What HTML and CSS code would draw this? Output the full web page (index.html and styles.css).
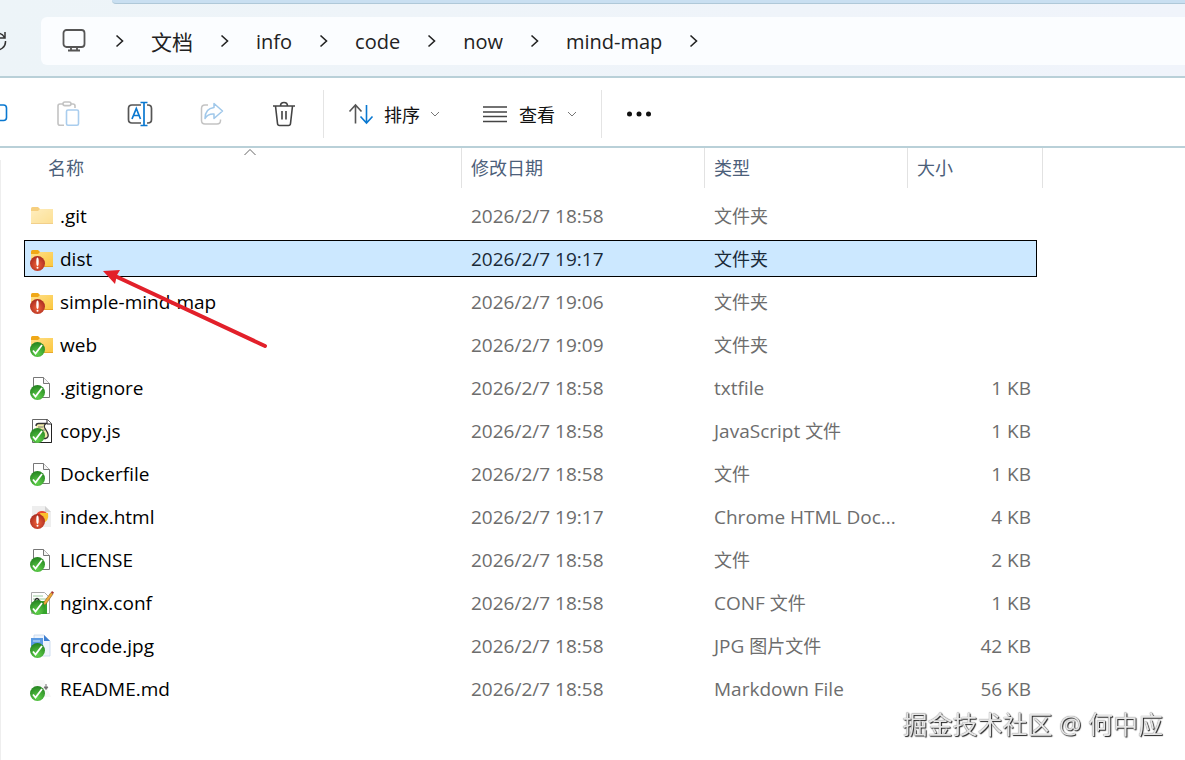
FILE: index.html
```html
<!DOCTYPE html>
<html lang="zh-CN">
  <head>
    <meta charset="utf-8">
    <title>mind-map</title>
    <link rel="stylesheet" href="styles.css">
  </head>
  <body>
    <!-- shared icon shapes -->
    <svg class="defs" width="0" height="0">
      <defs>
        <linearGradient id="folder-fill" x1="0" y1="0" x2="1" y2="1">
          <stop offset="0" stop-color="#ffe08a"/>
          <stop offset="1" stop-color="#fbc63c"/>
        </linearGradient>
        <radialGradient id="green" cx=".5" cy=".8" r=".8">
          <stop offset="0" stop-color="#5fd04a"/>
          <stop offset="1" stop-color="#23821f"/>
        </radialGradient>
        <radialGradient id="red" cx=".5" cy=".6" r=".6">
          <stop offset="0" stop-color="#f0623a"/>
          <stop offset="1" stop-color="#a82a20"/>
        </radialGradient>
      </defs>
      <symbol id="folder" viewBox="0 0 24 24">
        <path d="M1 4.500Q1 3 2.500 3H8l2 2v4H1z" fill="#f0a818"/>
        <path d="M1 7h7l2-2h13v15H1z" fill="url(#folder-fill)"/>
        <path d="M1 19.500h22" stroke="#e8a92c"/>
      </symbol>
      <symbol id="ok" viewBox="0 0 24 24">
        <circle cx="7.500" cy="16.500" r="7.500" fill="url(#green)"/>
        <path d="M3 17.500l2.500 3L12 12" fill="none" stroke="#fff" stroke-width="1.800"/>
      </symbol>
      <symbol id="changed" viewBox="0 0 24 24">
        <circle cx="7.500" cy="16.500" r="7.500" fill="url(#red)"/>
        <ellipse cx="7.500" cy="14.800" rx="1.200" ry="4.200" fill="#fff"/>
        <circle cx="7.500" cy="20.800" r="1" fill="#fff"/>
      </symbol>
      <symbol id="page" viewBox="0 0 24 24">
        <path d="M3.500 1.500h10l6 6v14h-16z" fill="#fff" stroke="#777"/>
        <path d="M13.500 1.500v6h6" fill="#f4f4f4" stroke="#777"/>
      </symbol>
      <symbol id="next" viewBox="0 0 9 14">
        <path d="M1.500 1.500L7.500 7l-6 5.500" fill="none" stroke="#222" stroke-width="1.600"/>
      </symbol>
      <symbol id="drop" viewBox="0 0 10 6">
        <path d="M1 1l4 4 4-4" fill="none" stroke="#777"/>
      </symbol>
    </svg>

    <div class="tab-strip"></div>
    <header class="address">
      <button class="refresh" aria-label="刷新">
        <svg width="20" height="20" viewBox="0 0 20 20" fill="none" stroke="#333" stroke-width="1.500"><path d="M17.500 6.500A8.500 8.500 0 1 0 18.500 10M18 1v6h-6"/></svg>
      </button>
      <nav class="crumbs">
        <svg class="monitor" viewBox="0 0 24 24" fill="none" stroke="#555" stroke-width="1.800"><rect x="1.500" y="1" width="21" height="17" rx="3"/><path d="M9 18v3.500M15 18v3.500M6 21.500h12"/></svg>
        <svg class="next"><use href="#next"/></svg>
        <a class="cjk" href="#">文档</a>
        <svg class="next"><use href="#next"/></svg>
        <a href="#">info</a>
        <svg class="next"><use href="#next"/></svg>
        <a href="#">code</a>
        <svg class="next"><use href="#next"/></svg>
        <a href="#">now</a>
        <svg class="next"><use href="#next"/></svg>
        <a href="#">mind-map</a>
        <svg class="next"><use href="#next"/></svg>
      </nav>
    </header>

    <div class="toolbar">
      <button class="tool" aria-label="复制">
        <svg width="24" height="26" viewBox="0 0 24 26" fill="none" stroke="#0a78d0" stroke-width="1.600"><rect x="7" y="4" width="15.500" height="15.500" rx="3"/></svg>
      </button>
      <button class="tool" aria-label="粘贴">
        <svg width="24" height="26" viewBox="0 0 24 26" fill="none" stroke-width="1.600"><path d="M8 24.200H4q-2 0-2-2V5q0-2 2-2h3M15 3h2q2 0 2 2v2" stroke="#c3c3c3"/><rect x="7" y="1" width="8" height="3.600" rx="1.800" stroke="#c3c3c3"/><rect x="10.500" y="9" width="12" height="15.200" rx="1.500" stroke="#a9cdee"/></svg>
      </button>
      <button class="tool" aria-label="重命名">
        <svg width="26" height="26" viewBox="0 0 26 26" fill="none" stroke-width="1.700"><path d="M14 22H5q-3.500 0-3.500-3.500v-11Q1.500 4 5 4h9M20 4h1q3.500 0 3.500 3.500v11Q24.500 22 21 22h-1" stroke="#555"/><path d="M17 1.500v23M13.500 1.500h7M13.500 24.500h7" stroke="#0a78d0"/><path d="M5 18L9.300 7.500 13.500 18M6.500 14.500h5.800" stroke="#0a78d0"/></svg>
      </button>
      <button class="tool" aria-label="共享">
        <svg width="26" height="26" viewBox="0 0 26 26" fill="none" stroke-width="1.500" stroke-linejoin="round"><path d="M9 4H6Q2.500 4 2.500 7.500v12Q2.500 23 6 23h12q3.500 0 3.500-3.500v-1" stroke="#c3c3c3"/><path d="M15 2.500l8.500 7.500L15 17.500V13q-6-.5-9 4.500 0-10 9-11z" stroke="#a0c8ea"/></svg>
      </button>
      <button class="tool" aria-label="删除">
        <svg width="24" height="26" viewBox="0 0 24 26" fill="none" stroke="#444" stroke-width="1.600"><path d="M1 5h22M8.500 5q0-3.500 3.500-3.500T15.500 5M3.500 5l2 17.500q.2 2 2 2h9q1.800 0 2-2l2-17.500M10 10v8.500M14 10v8.500"/></svg>
      </button>
      <span class="divider"></span>
      <button class="menu sort">
        <svg width="26" height="22" viewBox="0 0 26 22" fill="none" stroke-width="1.600"><path d="M7.500 20.500V2M1.500 8.500L7.500 2l6 6.500" stroke="#555"/><path d="M18.500 2v18.500M12.500 13.500l6 6.500 6-6.500" stroke="#0a78d0"/></svg>
        <span>排序</span>
        <svg class="drop"><use href="#drop"/></svg>
      </button>
      <button class="menu view">
        <svg width="24" height="18" viewBox="0 0 24 18" stroke="#444" stroke-width="1.400"><path d="M0 2h24M0 7h24M0 11.500h24M0 16.500h24"/></svg>
        <span>查看</span>
        <svg class="drop"><use href="#drop"/></svg>
      </button>
      <span class="divider"></span>
      <button class="more" aria-label="更多">
        <svg width="26" height="6" viewBox="0 0 26 6" fill="#111"><circle cx="3.500" cy="3" r="2.500"/><circle cx="13" cy="3" r="2.500"/><circle cx="22.500" cy="3" r="2.500"/></svg>
      </button>
    </div>

    <main class="content">
      <table class="files">
        <colgroup>
          <col class="col-name">
          <col class="col-date">
          <col class="col-type">
          <col class="col-size">
        </colgroup>
        <thead>
          <tr>
            <th class="name"><div class="head">名称<svg class="sorted" width="14" height="8" viewBox="0 0 14 8" fill="none" stroke="#666"><path d="M1.500 7L7 1.500 12.500 7"/></svg></div></th>
            <th><div class="head">修改日期</div></th>
            <th><div class="head">类型</div></th>
            <th><div class="head last">大小</div></th>
          </tr>
        </thead>
        <tbody>
          <tr>
            <td><div class="file"><svg class="icon faded"><use href="#folder"/></svg>.git</div></td>
            <td>2026/2/7 18:58</td><td><span class="cjk">文件夹</span></td><td></td>
          </tr>
          <tr class="selected">
            <td><div class="file"><svg class="icon"><use href="#folder"/><use href="#changed"/></svg>dist</div></td>
            <td>2026/2/7 19:17</td><td><span class="cjk">文件夹</span></td><td></td>
          </tr>
          <tr>
            <td><div class="file"><svg class="icon"><use href="#folder"/><use href="#changed"/></svg>simple-mind-map</div></td>
            <td>2026/2/7 19:06</td><td><span class="cjk">文件夹</span></td><td></td>
          </tr>
          <tr>
            <td><div class="file"><svg class="icon"><use href="#folder"/><use href="#ok"/></svg>web</div></td>
            <td>2026/2/7 19:09</td><td><span class="cjk">文件夹</span></td><td></td>
          </tr>
          <tr>
            <td><div class="file"><svg class="icon"><use href="#page"/><use href="#ok"/></svg>.gitignore</div></td>
            <td>2026/2/7 18:58</td><td>txtfile</td><td>1 KB</td>
          </tr>
          <tr>
            <td><div class="file"><svg class="icon"><path d="M2.500.5h15l4 4v19h-19z" fill="#fff" stroke="#666"/><path d="M17 .5v4.500h4.500v18.500H9" fill="none" stroke="#222"/><path d="M6 7q0-2.500 2.500-2.500H17q-3.500 1-2.500 4l3 5q2 5-2 6H8" fill="#f0ecaa" stroke="#333" stroke-width="1.300"/><path d="M8 8h5M10 11h5" stroke="#777"/><use href="#ok"/></svg>copy.js</div></td>
            <td>2026/2/7 18:58</td><td>JavaScript <span class="cjk">文件</span></td><td>1 KB</td>
          </tr>
          <tr>
            <td><div class="file"><svg class="icon"><use href="#page"/><use href="#ok"/></svg>Dockerfile</div></td>
            <td>2026/2/7 18:58</td><td><span class="cjk">文件</span></td><td>1 KB</td>
          </tr>
          <tr>
            <td><div class="file"><svg class="icon"><path d="M2 1h13l6 6v15H2z" fill="#eee"/><path d="M15 1v6h6z" fill="#d2d2d2"/><path d="M6 10a6.500 6.500 0 0 1 12 0z" fill="#e94b35"/><path d="M10 8h8q1.500 9-6 10z" fill="#fbc02d"/><use href="#changed"/></svg>index.html</div></td>
            <td>2026/2/7 19:17</td><td>Chrome HTML Doc...</td><td>4 KB</td>
          </tr>
          <tr>
            <td><div class="file"><svg class="icon"><use href="#page"/><use href="#ok"/></svg>LICENSE</div></td>
            <td>2026/2/7 18:58</td><td><span class="cjk">文件</span></td><td>2 KB</td>
          </tr>
          <tr>
            <td><div class="file"><svg class="icon"><path d="M1.500 1.500h13l5 5v16h-18z" fill="#fff" stroke="#aaa"/><path d="M3 5h10M3 8h14" stroke="#9ccc9c"/><path d="M5 12V9q2-3 4 0v3" fill="none" stroke="#222" stroke-width="1.300"/><path d="M8 10h9v13H8z" fill="#35a52c"/><path d="M13 15l1-4 7-9.500 2 1.500-7 10z" fill="#f0aa38" stroke="#8a5a20" stroke-width=".6"/><path d="M21 1.500L22 0l2 1.500-1 1.500z" fill="#a33"/><use href="#ok"/></svg>nginx.conf</div></td>
            <td>2026/2/7 18:58</td><td>CONF <span class="cjk">文件</span></td><td>1 KB</td>
          </tr>
          <tr>
            <td><div class="file"><svg class="icon"><path d="M4 1h10l6 6v15H4z" fill="#eef4fc" stroke="#c3d6ec" stroke-width=".8"/><path d="M14 1v6h6z" fill="#3f7fd0"/><path d="M1 4h12v9H1z" fill="#5b9ae2"/><path d="M3 7h7" stroke="#a9cdf2" stroke-width="1.500"/><use href="#ok"/></svg>qrcode.jpg</div></td>
            <td>2026/2/7 18:58</td><td>JPG <span class="cjk">图片文件</span></td><td>42 KB</td>
          </tr>
          <tr>
            <td><div class="file"><svg class="icon"><path d="M3 3h11l7 17H3z" fill="#f7f7f7"/><path d="M16 7v5M14 10l2 2.500 2-2.500z" fill="#555" stroke="#777"/><use href="#ok"/></svg>README.md</div></td>
            <td>2026/2/7 18:58</td><td>Markdown File</td><td>56 KB</td>
          </tr>
        </tbody>
      </table>
      <svg class="pointer" width="170" height="84" viewBox="0 0 170 84">
        <path d="M12 7L162 77" stroke="#e2202a" stroke-width="4" stroke-linecap="round"/>
        <path d="M0 2l17-1-3 5-2 9z" fill="#e2202a"/>
      </svg>
    </main>
    <div class="watermark">掘金技术社区 @ 何中应</div>
  </body>
</html>
```
FILE: styles.css
```css
* {
  box-sizing: border-box;
}

body {
  display: flex;
  flex-direction: column;
  margin: 0;
  min-height: 100vh;
  overflow-x: hidden;
  background: #fff;
  color: #111;
  font-family: "Open Sans", "Noto Sans CJK SC", sans-serif;
  font-size: 19px;
}

button {
  display: flex;
  align-items: center;
  flex: none;
  padding: 0;
  border: 0;
  background: none;
  color: inherit;
  font: inherit;
}

.defs {
  position: absolute;
}

/* window top */
.tab-strip {
  position: absolute;
  top: 0;
  left: 112px;
  right: 0;
  height: 4px;
  background: #c9dff1;
  border-bottom: 1px solid #afc8d8;
  border-bottom-left-radius: 4px;
}

.address {
  display: flex;
  height: 78px;
  padding: 17px 0 11px;
  background: linear-gradient(to right, #edf4f8, #f0f4fb);
  border-bottom: 2px solid #b9d0d8;
}

.refresh {
  width: 41px;
  margin-left: -13px;
  margin-right: 13px;
}

.crumbs {
  display: flex;
  flex: 1;
  align-items: center;
  gap: 27px;
  padding-left: 21px;
  background: #fbfdff;
  border-radius: 6px 0 0 6px;
  font-size: 20px;
}

.crumbs a {
  color: #222;
  text-decoration: none;
}

.crumbs .cjk {
  font-size: 21px;
}

.monitor {
  width: 24px;
  height: 24px;
  margin-right: 2px;
}

.next {
  width: 9px;
  height: 14px;
}

/* commands */
.toolbar {
  display: flex;
  align-items: center;
  height: 70px;
  padding-top: 3px;
  border-bottom: 2px solid #b9d0d8;
  font-size: 18px;
}

.tool {
  justify-content: center;
  width: 72px;
  height: 48px;
}

.tool:first-child {
  margin-left: -40px;
}

.divider {
  width: 1px;
  height: 48px;
  margin: 0 24px 0 3px;
  background: #e4e4e4;
}

.menu {
  gap: 10px;
  height: 48px;
}

.sort {
  margin-right: 43px;
}

.view {
  gap: 12px;
  margin-right: 21px;
}

.drop {
  width: 10px;
  height: 6px;
}

/* file list */
.content {
  position: relative;
  flex: 1;
  padding-left: 24px;
}

.content::before {
  content: "";
  position: absolute;
  top: 12px;
  bottom: 0;
  left: 0;
  width: 1px;
  background: #eee;
}

.files {
  table-layout: fixed;
  width: 1013px;
  margin-top: -6px;
  border-collapse: separate;
  border-spacing: 0 6px;
}

.col-name {
  width: 437px;
}

.col-date {
  width: 243px;
}

.col-type {
  width: 203px;
}

.col-size {
  width: 130px;
}

th {
  height: 43px;
  padding: 0;
  vertical-align: top;
  text-align: left;
  font-size: 18px;
  font-weight: normal;
  color: #4c607a;
}

.head {
  position: relative;
  height: 40px;
  padding-left: 9px;
  line-height: 40px;
  border-left: 1px solid #e2e2e2;
}

.name .head {
  padding-left: 24px;
  border-left: 0;
}

.head.last {
  width: calc(100% + 6px);
  border-right: 1px solid #e2e2e2;
}

.sorted {
  position: absolute;
  top: 0;
  left: 50%;
}

td {
  height: 37px;
  padding: 0 0 0 10px;
  line-height: 26px;
  color: #6d6d6d;
  white-space: nowrap;
}

td:first-child {
  padding-left: 6px;
  color: #000;
}

td:last-child {
  padding-right: 6px;
  text-align: right;
}

td .cjk {
  font-size: 18px;
}

.file {
  display: flex;
  align-items: center;
  gap: 6px;
}

.icon {
  width: 24px;
  height: 24px;
}

.faded {
  opacity: .55;
}

.selected {
  background: #cce8ff;
  outline: 1px solid #000;
  outline-offset: -1px;
}

.selected td {
  color: #1a2a38;
}

.selected td:first-child {
  color: #000;
}

/* red arrow over the rows */
.pointer {
  position: absolute;
  top: 121px;
  left: 103px;
}

.watermark {
  position: fixed;
  right: 22px;
  bottom: 19px;
  color: #e6e6e6;
  font-size: 25px;
  text-shadow: 1px 1px 1px #222, 0 0 1px #555;
}
```
